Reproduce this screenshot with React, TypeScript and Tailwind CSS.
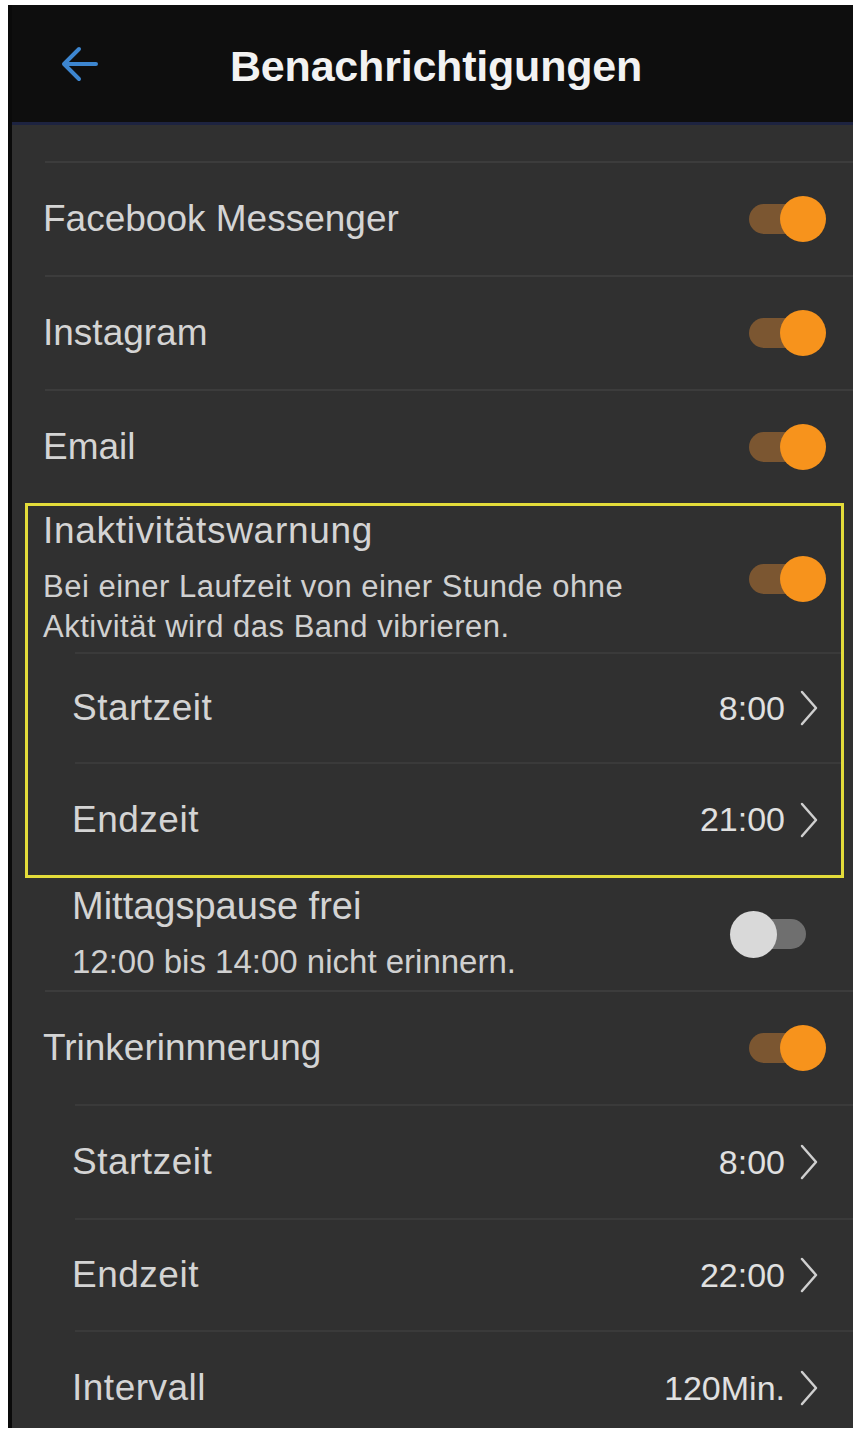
import React from "react";

const font = { fontFamily: '"Liberation Sans", Arial, sans-serif' };

function Toggle({ on }: { on: boolean }) {
  if (on) {
    return (
      <div className="relative w-[80px] h-[48px] shrink-0">
        <div className="absolute left-[3px] top-[9px] w-[58px] h-[30px] rounded-full bg-[#7b5631]" />
        <div className="absolute right-0 top-[1px] w-[46px] h-[46px] rounded-full bg-[#f7931c]" />
      </div>
    );
  }
  return (
    <div className="relative w-[76px] h-[48px] shrink-0 mr-[20px]">
      <div className="absolute left-[20px] top-[9px] w-[56px] h-[30px] rounded-full bg-[#6f6f6f]" />
      <div className="absolute left-0 top-[1px] w-[47px] h-[47px] rounded-full bg-[#d9d9d9]" />
    </div>
  );
}

function Chevron() {
  return (
    <svg width="20" height="36" viewBox="0 0 20 36" className="shrink-0">
      <polyline points="3,2 17,18 3,34" fill="none" stroke="#cfcfcf" strokeWidth="2.5" strokeLinejoin="round" strokeLinecap="round" />
    </svg>
  );
}

function ToggleRow({ label }: { label: string }) {
  return (
    <div className="h-[114px] shrink-0 ml-[33px] flex items-center justify-between pr-[27px] border-t-2 border-[#3c3c3c]">
      <span className="text-[37px] text-[#d4d4d4] -ml-[2px]">{label}</span>
      <Toggle on />
    </div>
  );
}

function ValueRow({ label, value, h = "h-[114px]", ml = "ml-[63px]", pr = "pr-[34px]" }: { label: string; value: string; h?: string; ml?: string; pr?: string }) {
  return (
    <div className={`${h} shrink-0 ${ml} flex items-center justify-between ${pr} border-t-2 border-[#3a3a3a]`}>
      <span className="text-[37px] text-[#d4d4d4] -ml-[3px] tracking-[0.5px]">{label}</span>
      <div className="flex items-center gap-[14px]">
        <span className="text-[34px] text-[#e0e0e0]">{value}</span>
        <Chevron />
      </div>
    </div>
  );
}

export default function App() {
  return (
    <div className="w-[859px] h-[1431px] bg-white pt-[5px] pl-[8px] pr-[6px] pb-[3px]" style={font}>
      <div className="h-full bg-[#303030] border-l-[4px] border-[#0a0a0a] flex flex-col overflow-hidden">
        <div className="h-[120px] shrink-0 bg-[#0e0e0e] border-b-[3px] border-[#1d2340] flex items-center">
          <svg width="40" height="36" viewBox="0 0 40 36" className="ml-[48px]">
            <path d="M36 18 H5 M19 3 L4 18 L19 33" fill="none" stroke="#3d86d0" strokeWidth="4" strokeLinecap="round" strokeLinejoin="round" />
          </svg>
          <span className="ml-[130px] mt-[6px] text-[43px] font-bold text-[#f2f2f2] tracking-[-0.2px]">Benachrichtigungen</span>
        </div>
        <div className="h-[36px] shrink-0" />
        <ToggleRow label="Facebook Messenger" />
        <ToggleRow label="Instagram" />
        <ToggleRow label="Email" />
        <div className="ml-[13px] mr-[9px] border-[3px] border-[#e3dc3a] h-[375px] shrink-0 flex flex-col">
          <div className="h-[146px] shrink-0 pl-[15px] pr-[15px] flex items-start justify-between">
            <div className="flex flex-col pt-[5px]">
              <span className="text-[37px] text-[#d4d4d4] leading-[40px] tracking-[0.7px]">Inaktivitätswarnung</span>
              <span className="text-[31px] text-[#d0d0d0] leading-[40px] mt-[16px] tracking-[0.5px]">Bei einer Laufzeit von einer Stunde ohne</span>
              <span className="text-[31px] text-[#d0d0d0] leading-[40px] tracking-[0.5px]">Aktivität wird das Band vibrieren.</span>
            </div>
            <div className="mt-[49px]"><Toggle on /></div>
          </div>
          <ValueRow label="Startzeit" value="8:00" h="h-[110px]" ml="ml-[47px]" pr="pr-[22px]" />
          <ValueRow label="Endzeit" value="21:00" h="flex-1" ml="ml-[47px]" pr="pr-[22px]" />
        </div>
        <div className="h-[112px] shrink-0 ml-[63px] pr-[27px] flex items-center justify-between">
          <div className="flex flex-col -ml-[3px]">
            <span className="text-[38px] text-[#d4d4d4] leading-[44px]">Mittagspause frei</span>
            <span className="text-[33px] text-[#d0d0d0] leading-[44px] mt-[12px]">12:00 bis 14:00 nicht erinnern.</span>
          </div>
          <Toggle on={false} />
        </div>
        <ToggleRow label="Trinkerinnnerung" />
        <ValueRow label="Startzeit" value="8:00" />
        <ValueRow label="Endzeit" value="22:00" h="h-[112px]" />
        <ValueRow label="Intervall" value="120Min." h="h-[114px]" />
      </div>
    </div>
  );
}
